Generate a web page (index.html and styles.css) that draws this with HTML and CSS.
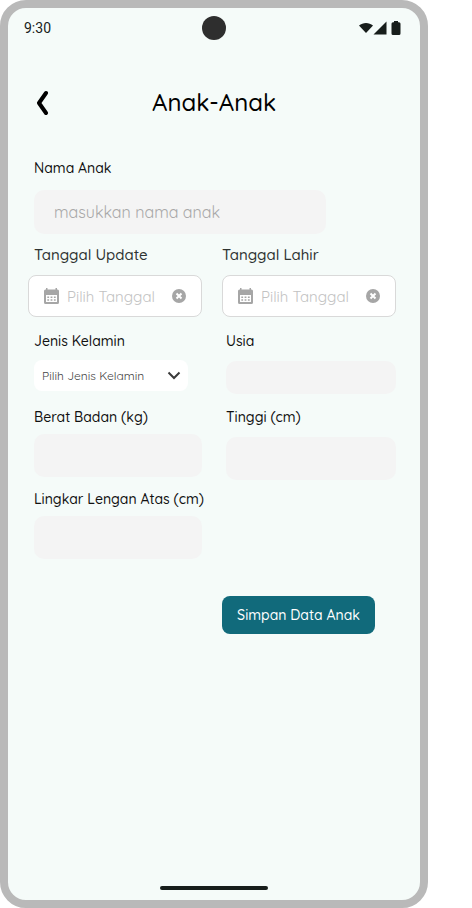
FILE: index.html
```html
<!DOCTYPE html>
<html lang="id">
<head>
<meta charset="utf-8">
<meta name="viewport" content="width=device-width, initial-scale=1">
<title>Anak-Anak</title>
<link rel="stylesheet" href="styles.css">
</head>
<body>
<div class="phone">
  <div class="status">
    <span class="time">9:30</span>
    <span class="camera"></span>
    <svg class="indicators" width="46" height="16" viewBox="0 0 46 16" aria-hidden="true">
      <path d="M1 5.500C5 2 11 2 15 5.500L8 13Z"/>
      <path d="M28.500 1.500V14.500H15.500Z"/>
      <path d="M36 1h4v1.200h1q1.500 0 1.500 1.500v9.800q0 1.500-1.500 1.500h-6q-1.500 0-1.500-1.500V3.700q0-1.500 1.500-1.500h1z"/>
    </svg>
  </div>
  <header class="header">
    <button class="back" type="button" aria-label="Kembali">
      <svg width="14" height="26" viewBox="0 0 14 26"><path d="M11 4L4 14L11 24"/></svg>
    </button>
    <h1 class="title">Anak-Anak</h1>
  </header>
  <form class="form">
    <div class="row">
      <div class="field field-left field-name">
        <label for="nama">Nama Anak</label>
        <input class="box box-tall" id="nama" type="text" placeholder="masukkan nama anak">
      </div>
    </div>
    <div class="row row-dates">
      <div class="field field-date">
        <label class="label-inset" for="update">Tanggal Update</label>
        <div class="date">
          <svg width="16" height="16" viewBox="0 0 16 16" aria-hidden="true"><path fill-rule="evenodd" d="M3 0h1.500v1.500h8V0H14v1.500h.5q1.500 0 1.500 1.500v11.500q0 1.500-1.500 1.500h-12Q1 16 1 14.500V3q0-1.500 1.500-1.500H3zM3 7v7h11V7zM4.300 8.500h1.800v1.500H4.300zM7.600 8.500h1.800v1.500H7.600zM10.900 8.500h1.800v1.500h-1.800zM4.300 11.300h1.800v1.500H4.300zM7.600 11.300h1.800v1.500H7.600zM10.900 11.300h1.800v1.500h-1.800z"/></svg>
          <input id="update" type="text" placeholder="Pilih Tanggal">
          <button type="button" aria-label="Hapus tanggal update"><svg width="14" height="14" viewBox="0 0 14 14"><circle cx="7" cy="7" r="7"/><path class="cross" d="M4.500 4.500l5 5M9.500 4.500L4.500 9.500"/></svg></button>
        </div>
      </div>
      <div class="field field-date">
        <label for="lahir">Tanggal Lahir</label>
        <div class="date">
          <svg width="16" height="16" viewBox="0 0 16 16" aria-hidden="true"><path fill-rule="evenodd" d="M3 0h1.500v1.500h8V0H14v1.500h.5q1.500 0 1.500 1.500v11.500q0 1.500-1.500 1.500h-12Q1 16 1 14.500V3q0-1.500 1.500-1.500H3zM3 7v7h11V7zM4.300 8.500h1.800v1.500H4.300zM7.600 8.500h1.800v1.500H7.600zM10.900 8.500h1.800v1.500h-1.800zM4.300 11.300h1.800v1.500H4.300zM7.600 11.300h1.800v1.500H7.600zM10.900 11.300h1.800v1.500h-1.800z"/></svg>
          <input id="lahir" type="text" placeholder="Pilih Tanggal">
          <button type="button" aria-label="Hapus tanggal lahir"><svg width="14" height="14" viewBox="0 0 14 14"><circle cx="7" cy="7" r="7"/><path class="cross" d="M4.500 4.500l5 5M9.500 4.500L4.500 9.500"/></svg></button>
        </div>
      </div>
    </div>
    <div class="row row-profile">
      <div class="field field-left field-select">
        <label for="kelamin">Jenis Kelamin</label>
        <div class="select">
          <select id="kelamin">
            <option>Pilih Jenis Kelamin</option>
            <option>Laki-laki</option>
            <option>Perempuan</option>
          </select>
          <svg width="14" height="9" viewBox="0 0 14 9" aria-hidden="true"><path d="M1.500 1.500L7 7L12.500 1.500"/></svg>
        </div>
      </div>
      <div class="field field-right">
        <label for="usia">Usia</label>
        <input class="box box-short" id="usia" type="text">
      </div>
    </div>
    <div class="row row-measure">
      <div class="field field-left field-close">
        <label for="berat">Berat Badan (kg)</label>
        <input class="box box-medium" id="berat" type="text">
      </div>
      <div class="field field-right">
        <label for="tinggi">Tinggi (cm)</label>
        <input class="box box-medium" id="tinggi" type="text">
      </div>
    </div>
    <div class="row">
      <div class="field field-left field-close">
        <label for="lengan">Lingkar Lengan Atas (cm)</label>
        <input class="box box-medium" id="lengan" type="text">
      </div>
    </div>
    <div class="row row-actions">
      <button class="submit" type="submit">Simpan Data Anak</button>
    </div>
  </form>
  <div class="home"></div>
</div>
</body>
</html>
```
FILE: styles.css
```css
* {
  box-sizing: border-box;
}

body {
  margin: 0;
  background: #fff;
  color: #111;
  font-family: Quicksand, Inter, sans-serif;
}

button,
input,
select {
  margin: 0;
  padding: 0;
  border: 0;
  background: none;
  color: inherit;
  font: inherit;
}

.phone {
  display: flex;
  flex-direction: column;
  min-height: 100vh;
  margin-right: 44px;
  border: 8px solid #b9b9b9;
  border-radius: 26px;
  background: #f5fbf9;
}

.status {
  display: grid;
  grid-template-columns: 1fr auto 1fr;
  align-items: center;
  height: 40px;
  padding: 0 16px;
}

.time {
  color: #171d1b;
  font: 14px/20px Roboto, sans-serif;
}

.camera {
  width: 24px;
  height: 24px;
  border-radius: 50%;
  background: #2e2e2e;
}

.indicators {
  justify-self: end;
  fill: #171d1b;
}

.header {
  display: grid;
  grid-template-columns: 14px 1fr 14px;
  align-items: center;
  padding: 34px 27px;
}

.back svg {
  display: block;
  fill: none;
  stroke: #000;
  stroke-width: 4;
  stroke-linecap: round;
  stroke-linejoin: round;
}

.title {
  margin: 0;
  color: #000;
  font-size: 24px;
  font-weight: 500;
  line-height: 40px;
  text-align: center;
}

.form {
  padding: 2px 24px 0 20px;
}

.row {
  display: grid;
  grid-template-columns: 1fr 1fr;
  column-gap: 20px;
  margin-bottom: 11px;
}

.row-dates {
  margin-bottom: 14px;
}

.row-profile {
  margin-bottom: 13px;
}

.row-measure {
  margin-bottom: 9px;
}

.field {
  display: flex;
  flex-direction: column;
  gap: 10px;
  min-width: 0;
}

.field-left {
  padding-left: 6px;
}

.field-right {
  padding-left: 4px;
}

.field-select {
  gap: 9px;
}

.field-close {
  gap: 7px;
}

.field-name {
  grid-column: 1 / -1;
  gap: 12px;
  margin-right: 70px;
}

.field label {
  font-size: 14px;
  font-weight: 500;
  line-height: 20px;
  white-space: nowrap;
}

.field-date label {
  color: #2e3332;
  font-size: 15px;
}

.field .label-inset {
  padding-left: 6px;
}

.box {
  width: 100%;
  padding: 0 20px;
  border-radius: 10px;
  background: #f4f4f4;
  font-size: 16px;
  font-weight: 400;
}

.box-tall {
  height: 44px;
}

.box-medium {
  height: 43px;
}

.box-short {
  height: 33px;
}

::placeholder {
  color: #a8a8a8;
  opacity: 1;
}

.date {
  display: flex;
  align-items: center;
  gap: 8px;
  height: 42px;
  padding: 0 15px 0 14px;
  border: 1px solid #d9d9d9;
  border-radius: 8px;
  background: #fff;
}

.date svg {
  display: block;
  flex: none;
  fill: #a6a6a6;
}

.date input {
  flex: 1;
  min-width: 0;
  font-size: 15px;
  font-weight: 400;
}

.date input::placeholder {
  color: #c2c2c2;
}

.date .cross {
  stroke: #fff;
  stroke-width: 2;
}

.select {
  display: grid;
  align-items: center;
  height: 31px;
  margin-right: 14px;
  border-radius: 8px;
  background: #fff;
}

.select select,
.select svg {
  grid-area: 1 / 1;
}

.select select {
  width: 100%;
  height: 100%;
  padding: 0 24px 0 8px;
  appearance: none;
  color: #444;
  font-size: 12px;
}

.select svg {
  justify-self: end;
  margin-right: 7px;
  fill: none;
  stroke: #3a3a3a;
  stroke-width: 2;
  pointer-events: none;
}

.row-actions {
  padding-top: 26px;
}

.submit {
  grid-column: 2;
  height: 38px;
  margin-right: 21px;
  border-radius: 8px;
  background: #116a7b;
  color: #fff;
  font-size: 14px;
  font-weight: 500;
  white-space: nowrap;
}

.home {
  width: 108px;
  height: 4px;
  margin: auto auto 10px;
  border-radius: 2px;
  background: #171d1b;
}
```
